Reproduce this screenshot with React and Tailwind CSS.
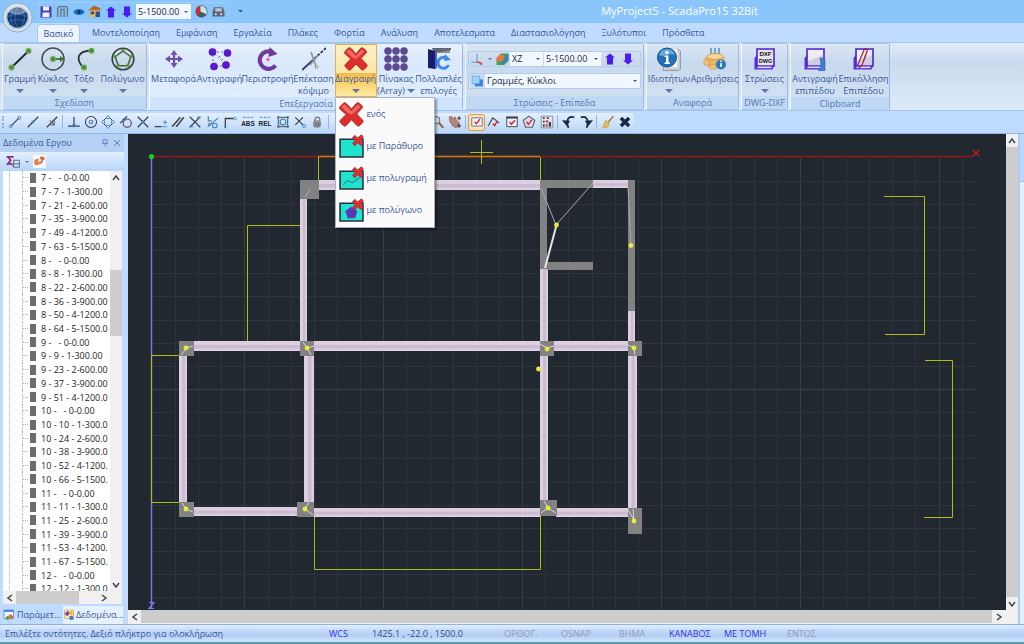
import React from "react";

const ribbonTabs = ["Μοντελοποίηση", "Εμφάνιση", "Εργαλεία", "Πλάκες", "Φορτία", "Ανάλυση", "Αποτελεσματα", "Διαστασιολόγηση", "Ξυλότυποι", "Πρόσθετα"];

const treeRows = [
  "7 -   - 0-0.00", "7 - 7 - 1-300.00", "7 - 21 - 2-600.00", "7 - 35 - 3-900.00", "7 - 49 - 4-1200.0", "7 - 63 - 5-1500.0",
  "8 -   - 0-0.00", "8 - 8 - 1-300.00", "8 - 22 - 2-600.00", "8 - 36 - 3-900.00", "8 - 50 - 4-1200.0", "8 - 64 - 5-1500.0",
  "9 -   - 0-0.00", "9 - 9 - 1-300.00", "9 - 23 - 2-600.00", "9 - 37 - 3-900.00", "9 - 51 - 4-1200.0",
  "10 -   - 0-0.00", "10 - 10 - 1-300.0", "10 - 24 - 2-600.0", "10 - 38 - 3-900.0", "10 - 52 - 4-1200.", "10 - 66 - 5-1500.",
  "11 -   - 0-0.00", "11 - 11 - 1-300.0", "11 - 25 - 2-600.0", "11 - 39 - 3-900.0", "11 - 53 - 4-1200.", "11 - 67 - 5-1500.",
  "12 -   - 0-0.00", "12 - 12 - 1-300.0",
];

function Svg({ s = 24, className = "", children }) {
  return (
    <svg viewBox="0 0 24 24" width={s} height={s} className={"shrink-0 " + className} fill="none" aria-hidden="true">
      {children}
    </svg>
  );
}

function Caret({ className = "text-[#5f76a8]", w = 8 }) {
  return (
    <svg viewBox="0 0 8 4" width={w} height={w / 2} className={"shrink-0 " + className} aria-hidden="true">
      <path d="M0 0h8L4 4z" fill="currentColor" />
    </svg>
  );
}

function RedX({ s = 25 }) {
  return (
    <Svg s={s}>
      <path d="M1 4.5 4.2 1.2c1-.8 2-.5 3 .4L12 6.800 16.500 1.500c.9-.9 2-1 3-.2l2.500 2.200c.9.9.8 1.700 0 2.600L17 11.500l5.500 5.700c.9 1 .8 1.900 0 2.700l-2.500 2.600c-1 .8-2 .8-3-.2L12 17l-5 5.500c-1 .9-1.900.9-2.800.1L1.500 20c-.9-.9-.8-1.800 0-2.700L6.800 12 1.200 7C.3 6.100.2 5.300 1 4.500z" fill="#dc2f2b" stroke="#a81c1c" strokeWidth=".8" />
      <path d="M2.500 4.800 5.300 2.200 12 9l6-6.500 2.500 2-6.800 6.600-2 .8-3.500-1.500z" fill="#f47a70" opacity=".8" />
    </Svg>
  );
}

const arrowUp = <path d="M12 1 22 9h-4v14H6V9H2z" fill="#4a1df0" />;
const arrowDown = <path d="M12 23 22 15h-4V1H6v14H2z" fill="#4a1df0" />;

const node = (x, y, r = 3) => <g key={x + "-" + y}><circle cx={x} cy={y} r={r} fill="#67a84a" /><circle cx={x} cy={y} r={r / 2.5} fill="#3d7a2e" /></g>;

const icons = {
  line: <Svg><path d="M3.500 20.500 20.500 4" stroke="#20242c" strokeWidth="1.800" />{node(3.500, 20.500)}{node(20.500, 4)}</Svg>,
  circle: <Svg><circle cx="12" cy="12" r="11" stroke="#454b55" strokeWidth="1.500" /><path d="M12 12h9" stroke="#2e7a2c" strokeWidth="1.800" /><path d="m19 9 4 3-4 3z" fill="#3a6b35" />{node(12, 12)}</Svg>,
  arc: <Svg><path d="M19.500 3.500C6 4 3 11 11 20.500" stroke="#30353e" strokeWidth="1.800" />{node(19.500, 3.800)}{node(12, 20.500)}</Svg>,
  polygon: <Svg><circle cx="12" cy="12" r="10.800" stroke="#3c424c" strokeWidth="1.600" /><path d="m12 4 7.800 5.700-3 9H7.200l-3-9z" stroke="#3f5e3a" strokeWidth="1.500" />{node(12, 4, 2)}{node(19.800, 9.700, 2)}{node(16.800, 18.500, 2)}{node(7.200, 18.500, 2)}{node(4.200, 9.700, 2)}</Svg>,
  move: <Svg><path d="M12 5v14M5 12h14" stroke="#6a52a8" strokeWidth="2.200" /><path d="m12 3 3.500 5h-7zM12 21l3.500-5h-7zM3 12l5-3.500v7zM21 12l-5-3.500v7z" fill="#6a52a8" /></Svg>,
  copy: <Svg><path d="M7 7l10 10" stroke="#8090c0" strokeDasharray="2 2" /><path d="M5 8v9M9 5h8M8 19h9M11 9l4 4" stroke="#536070" strokeWidth=".8" strokeDasharray="2 2" /><g fill="#6512d6" stroke="#3e1c98" strokeWidth=".6"><circle cx="4.500" cy="5" r="3.600" /><circle cx="19.500" cy="6" r="3.600" /><circle cx="6" cy="19.500" r="3.600" /><circle cx="18" cy="18" r="3.600" /></g></Svg>,
  rotate: <Svg><path d="M16 5A8.800 8.800 0 1 0 19.500 18.500" stroke="#6f3c9e" strokeWidth="4.200" /><path d="m13.500 0 8 7-9 3z" fill="#6f3c9e" /><circle cx="12" cy="12.500" r="1.700" fill="#f052c8" /></Svg>,
  trim: <Svg><path d="M0 23 11 13" stroke="#343a72" strokeWidth="1.800" /><path d="M12 12 24 1" stroke="#2f3448" strokeWidth="1.800" strokeDasharray="3 1.500" /><path d="m9 5 5 14M16 8l-8 10" stroke="#8a9099" strokeWidth="1.600" /><circle cx="14.500" cy="20" r="1.500" stroke="#8a9099" /></Svg>,
  array: <Svg>{[4, 12, 20].flatMap((x) => [4, 12, 20].map((y) => <circle key={x + "," + y} cx={x} cy={y} r="3.500" fill="#5d4a92" stroke="#47367a" strokeWidth=".5" />))}</Svg>,
  multi: <Svg><path d="M5 1h18v5H7z" fill="#8a919c" /><path d="M5 1 24 1v2L8 6z" fill="#5f6672" /><path d="M1 2 8 4v18l-7-1z" fill="#161f6e" /><path d="M8 4 10 6v15l-2 1z" fill="#4d62c8" /><path d="M20.500 12a5.500 5.500 0 1 0 1 6" stroke="#3e8be0" strokeWidth="3" /><path d="m18 7 6 6-7 1z" fill="#3e8be0" /><circle cx="16" cy="15.500" r="2" fill="#e8f2fc" /></Svg>,
  info: <Svg><path d="M10 2h11l2.500 2v18l-2 1.500H6z" fill="#c9ccd2" stroke="#8a8f98" strokeWidth=".8" /><path d="M9 1.500h11.500v19H7z" fill="#f2f3f5" /><circle cx="10" cy="10.500" r="9.500" fill="#2070b8" stroke="#174f8c" strokeWidth="1" /><path d="M2 8a8.300 8.300 0 0 1 16 0C12 5.500 7 11 2 8z" fill="#7fc0ea" opacity=".7" /><circle cx="10" cy="5.500" r="1.700" fill="#fff" /><path d="M7.500 8.500h4v7H13V17H7.500v-1.500H9V10H7.500z" fill="#fff" /></Svg>,
  count: <Svg><path d="M8 1v7M12 1v7M16 1v7" stroke="#6fa7d8" strokeWidth="2" /><path d="M2 10h20v5l-4 6H6l-4-5z" fill="#e6b768" /><ellipse cx="12" cy="9.500" rx="8" ry="3" fill="#f6d795" stroke="#d69b45" /><path d="M1 13h5v5H1zM7 18h6v4H7z" fill="#f1c77c" stroke="#c99043" strokeWidth=".6" /><circle cx="18" cy="17.500" r="5" fill="#287bc0" /><path d="M18 16v4M18 13.500v1.500" stroke="#fff" strokeWidth="1.600" /></Svg>,
  dxf: <Svg><path d="M4 8 1.500 11v11.500h18L21 19H4z" fill="#5a30e0" /><path d="M4 2h17v17H4z" fill="#e6e6ec" stroke="#4a22d8" strokeWidth="1.600" /><path d="M4.500 19.500h14v1.600h-14z" fill="#dadcf4" /><text x="12.500" y="9" textAnchor="middle" fontSize="6" fontWeight="800" fill="#111" fontFamily="Liberation Sans, sans-serif">DXF</text><text x="12.500" y="15.500" textAnchor="middle" fontSize="5.500" fontWeight="800" fill="#111" fontFamily="Liberation Sans, sans-serif">DWG</text></Svg>,
  copyLevel: <Svg><path d="M4 8 1.500 11v11.500h18L21 19H4z" fill="#5a30e0" /><path d="M4 2h17v17H4z" fill="#d0cfe2" stroke="#4a22d8" strokeWidth="1.600" /><path d="M5 3h15v5L5 14z" fill="#eeedf6" /><path d="M4.500 19.500h14v1.600h-14z" fill="#dadcf4" /><path d="M17 11c6 0 5 3 5 6v6.500h-7c3-2 3-4 3-6.500z" fill="#3f7fd0" stroke="#2858a8" strokeWidth=".6" /></Svg>,
  pasteLevel: <Svg><path d="M4 8 1.500 11v11.500h18L21 19H4z" fill="#5a30e0" /><path d="M4 2h17v17H4z" fill="#d0cfe2" stroke="#4a22d8" strokeWidth="1.600" /><path d="M5 3h15v5L5 14z" fill="#eeedf6" /><path d="M4.500 19.500h14v1.600h-14z" fill="#dadcf4" /><path d="M14 8 10 18c-1 3-5 2.500-4-.5L12 3c1-2.500 4-1.500 3.200 1L11 15" stroke="#a32a4c" strokeWidth="1.300" /></Svg>,
};

function RibbonButton({ icon, label, second, caret, width, inlineCaret }) {
  return (
    <button type="button" className={"flex shrink-0 flex-col items-center pt-[3px] " + width}>
      {icon}
      <span className="mt-[2px] whitespace-nowrap leading-[12px]">{label}</span>
      {second && (
        <span className="flex items-center gap-[2px] whitespace-nowrap leading-[12px]">
          {second}
          {inlineCaret && <Caret />}
        </span>
      )}
      {caret && <span className="flex h-[11px] items-center"><Caret /></span>}
    </button>
  );
}

function Group({ title, width, light, children }) {
  const tone = light ? "bg-[linear-gradient(#e6f0fd,#d9e8fb_30%,#e2f0ff)]" : "bg-[linear-gradient(#dce7f5,#c8d9ed_28%,#d3e3f5)]";
  const foot = light ? "bg-[#cfe5fd]" : "bg-[#bfd8f3]";
  return (
    <section aria-label={title} className={"flex shrink-0 flex-col rounded-[2px] border border-[#a9c5e8] border-l-white/70 border-r-[#9dbade] " + width + " " + tone}>
      <div className="flex flex-1 justify-center">{children}</div>
      <h2 className={"h-[13px] text-center leading-[13px] text-[#5577b4] " + foot}>{title}</h2>
    </section>
  );
}

function Combo({ label, value, className = "" }) {
  return (
    <span className={"flex items-center bg-[#f1f7ff] pr-[3px] text-[#222c44] " + className}>
      <select aria-label={label} className="min-w-0 flex-1 appearance-none bg-transparent pl-[2px] outline-none">
        <option>{value}</option>
      </select>
      <Caret w={4} className="text-[#445577]" />
    </span>
  );
}

function MenuThumb({ children }) {
  return (
    <Svg s={25}>
      <path d="M1 5h22v17H1z" fill="#1fe3cb" stroke="#24303c" strokeWidth="1.500" />
      {children}
      <path d="m13 3.500 2-2.200L18 3.800 21.500.8 23.500 3l-2.800 3 3 3-2.200 2.200L18 8.500l-3 2.700-2-2 2.800-3.200z" fill="#e03030" stroke="#9d1b22" strokeWidth=".7" />
    </Svg>
  );
}

function DeleteMenu() {
  const items = [
    ["ενός", <RedX key="x" />],
    ["με Παράθυρο", <MenuThumb key="w" />],
    ["με πολυγραμή", <MenuThumb key="l"><path d="m4 18 4-4 5 2 7-5" stroke="#2a9aa0" strokeWidth="1.300" /></MenuThumb>],
    ["με πολύγωνο", <MenuThumb key="p"><path d="m11.500 8.500 6 4-2 7h-7l-2.500-7z" fill="#5a37b8" /></MenuThumb>],
  ];
  return (
    <div role="menu" className="absolute left-0 top-full z-20 flex w-[100px] flex-col border border-[#a8b2c2] bg-[#fafafa] pb-px shadow-[2px_2px_2px_rgba(0,0,0,0.35)]">
      {items.map(([label, icon]) => (
        <button type="button" role="menuitem" key={label} className="flex h-8 items-center gap-[3px] whitespace-nowrap pl-[3px]">
          {icon}
          {label}
        </button>
      ))}
    </div>
  );
}

const K = "#3a3f48";
const B = "#3f86c8";
const tools = {
  a: [
    ["Τέλος", <><path d="m5 19 14-14" stroke={K} strokeWidth="2" /><circle cx="4.500" cy="19.500" r="2.500" stroke={B} strokeWidth="1.500" /><circle cx="19.500" cy="4.500" r="2.500" stroke={B} strokeWidth="1.500" /></>],
    ["Μέσο", <><path d="M3 21 21 3" stroke={K} strokeWidth="2" /><circle cx="12" cy="12" r="2.500" fill={B} /></>],
    ["Πλησίον", <><path d="M3 21 21 3" stroke={K} strokeWidth="2" /><path d="m8 9 8 8m0-8v8H9" stroke="#5c6470" strokeWidth="1.800" /></>],
  ],
  b: [
    ["Κάθετο", <><path d="M12 3v15M2 19h20" stroke={K} strokeWidth="2" /><circle cx="12" cy="18" r="2.500" stroke={B} strokeWidth="1.500" /></>],
    ["Κέντρο", <><circle cx="12" cy="12" r="9.500" stroke={K} strokeWidth="1.800" /><circle cx="12" cy="12" r="3" stroke={B} strokeWidth="2" /></>],
    ["Τεταρτημόριο", <><circle cx="12" cy="12" r="7.500" stroke={K} strokeWidth="1.600" /><g fill="#d8ecff" stroke={B} strokeWidth="1.500"><circle cx="12" cy="4" r="2.500" /><circle cx="12" cy="20" r="2.500" /><circle cx="4" cy="12" r="2.500" /><circle cx="20" cy="12" r="2.500" /></g></>],
    ["Εφαπτομένη", <><path d="m2 14 12-12" stroke={K} strokeWidth="2" /><circle cx="14" cy="14" r="7" stroke={K} strokeWidth="1.800" /><circle cx="9" cy="8" r="2.500" stroke={B} strokeWidth="1.500" /></>],
    ["Τομή", <><path d="m3 3 18 18M21 3 3 21" stroke={K} strokeWidth="2.200" /><circle cx="12" cy="12" r="2.500" fill={B} /></>],
    ["Προέκταση", <><path d="M1 20h12" stroke={K} strokeWidth="2" /><path d="M14 20h9M19 9v7m-3.500-3.500h7" stroke={B} strokeWidth="1.500" strokeDasharray="7 1" /></>],
    ["Παράλληλο", <path d="M2 20 16 4M9 20 22 4" stroke={K} strokeWidth="2.500" />],
    ["Φαινόμενη τομή", <><path d="m3 3 18 18M21 3 3 21" stroke={K} strokeWidth="2" /><path d="M2 20h7M15 4h7" stroke={B} strokeWidth="1.800" /></>],
    ["Τοπικά", <><path d="M4 2v8h6M3 20 21 5" stroke={B} strokeWidth="2" /><circle cx="15" cy="18" r="4" stroke={B} strokeWidth="1.800" /><circle cx="6" cy="16" r="2" stroke={K} /></>],
    ["Ορθογώνια", <><path d="M4 21V6h14" stroke={K} strokeWidth="2.200" /><circle cx="20" cy="6" r="2.500" stroke={B} strokeWidth="1.500" /><circle cx="4" cy="21" r="2" fill={B} /></>],
    ["ABS", <><path d="M3 4h18" stroke={B} strokeWidth="1.500" strokeDasharray="5 2" /><text x="12" y="18" textAnchor="middle" fontSize="11" fontWeight="900" fill="#20262f" fontFamily="Liberation Sans, sans-serif">ABS</text></>],
    ["REL", <><path d="M3 4h18" stroke={B} strokeWidth="1.500" strokeDasharray="5 2" /><text x="12" y="18" textAnchor="middle" fontSize="11" fontWeight="900" fill="#20262f" fontFamily="Liberation Sans, sans-serif">REL</text></>],
    ["Πλαίσιο", <><path d="M4 4h16v16H4z" stroke={K} strokeWidth="1.500" /><circle cx="12" cy="12" r="5" stroke={B} strokeWidth="2" /><path d="M2 2h4v4H2zM18 2h4v4h-4zM2 18h4v4H2zM18 18h4v4h-4z" fill="#54708c" /></>],
    ["Διαγραφή σημείου", <><path d="m4 4 13 13M17 4 4 17" stroke={K} strokeWidth="2" /><circle cx="19" cy="19" r="2.800" stroke={B} strokeWidth="1.500" /></>],
    ["Κλείδωμα", <><rect x="5" y="9" width="14" height="13" rx="6" fill="#8b8f96" /><path d="M8 11c0-10 10-10 9 0M9 15h8M9 18h8" stroke="#6c7076" strokeWidth="2" /></>],
  ],
  c: [
    ["Μεγέθυνση", <><circle cx="9" cy="9" r="6" fill="#cfe6fa" stroke="#6c7480" strokeWidth="2" /><path d="m13 13 8 9" stroke="#9a6a3c" strokeWidth="4" /></>],
    ["Μετακίνηση", <><path d="M2 3h5l2 4 3-4 3 7 4 3v6l-5 3-6-3-5-8z" fill="#b78478" stroke="#7b4e48" /><path d="M19 2v7m-3.500-3.500h7M19 15v7m-3-3.500h6" stroke="#3a4252" strokeWidth="2" /></>],
  ],
  d: [
    ["Επιλογή", <><path d="M3 5h18v14H3z" fill="#f8f4fa" stroke="#66709a" strokeWidth="1.600" /><path d="m8 12 3 3 6-8" stroke="#d62836" strokeWidth="2.500" /></>],
    ["Πολυγραμμή", <><path d="m2 19 8-14 11 9" stroke={K} strokeWidth="1.800" /><path d="m10 15 3 3 5-8" stroke="#d62836" strokeWidth="2.500" /></>],
    ["Παράθυρο", <><path d="M3 5h18v15H3z" fill="#eaf0fa" stroke={K} strokeWidth="1.500" /><path d="M2 4h20" stroke={K} strokeWidth="3" /><path d="m8 12 3 4 6-7" stroke="#d62836" strokeWidth="2.500" /></>],
    ["Πολύγωνο", <><path d="m12 2 10 7-4 12H6L2 9z" stroke="#5b626e" strokeWidth="1.800" fill="#d8dce4" /><path d="m8 12 3 4 6-8" stroke="#d62836" strokeWidth="2.500" /></>],
    ["Φίλτρα", <><path d="M2 2h20v20H2z" fill="#dfe4ee" stroke="#586070" /><path d="M5 4h3v3H5zM12 4h3v3h-3zM5 10h3v3H5zM5 16h3v4H5zM15 12h4v8h-4z" fill="#37404e" /><path d="M10 9h4v4h-4zM10 15h3v5h-3z" fill="#d63b4a" /></>],
  ],
  e: [
    ["Αναίρεση", <><path d="M21 4C11 1 6 8 11 22" stroke="#182848" strokeWidth="3" /><path d="m0 9 14 1-6 9z" fill="#182848" /></>],
    ["Επανάληψη", <><path d="M3 4c10-3 15 4 10 18" stroke="#182848" strokeWidth="3" /><path d="m24 9-14 1 6 9z" fill="#182848" /></>],
  ],
  f: [
    ["Καθαρισμός", <><path d="m21 2-9 11" stroke="#a0784a" strokeWidth="2.500" /><path d="m8 9 7 7-6 6H3z" fill="#eab950" stroke="#b98930" /></>],
    ["Κλείσιμο", <path d="m5 5 14 14M19 5 5 19" stroke="#14284c" strokeWidth="6" />],
  ],
};

function ToolGroup({ items, width, active }) {
  return (
    <div className={"flex shrink-0 items-center justify-between " + width}>
      {items.map(([name, art]) => (
        <button type="button" key={name} aria-label={name} className={name === active ? "flex size-[17px] items-center justify-center rounded-[2px] border border-[#e0a040] bg-[#fbe0b4]" : "flex size-[17px] items-center justify-center"}>
          <Svg s={14}>{art}</Svg>
        </button>
      ))}
    </div>
  );
}

const Sep = () => <span className="mx-[2px] h-[14px] w-px shrink-0 bg-[#9ab6dc]" />;

function Beam({ x, y, w, h }) {
  const horizontal = w > h;
  return (
    <g>
      <rect x={x} y={y} width={w} height={h} fill="#dccfdf" />
      {horizontal
        ? <rect x={x} y={y + h * 0.4} width={w} height={h * 0.35} fill="#cbbad0" />
        : <rect x={x + w * 0.4} y={y} width={w * 0.35} height={h} fill="#cbbad0" />}
    </g>
  );
}

function Drawing() {
  const cols = Array.from({ length: 35 }, (_, i) => 175 + i * 23.14);
  const rows = Array.from({ length: 19 }, (_, i) => 180.7 + i * 23.14);
  const beams = [
    [319, 180, 222, 10], [593, 180, 35, 8], [300, 198, 7, 144], [193, 341, 436, 10], [179, 356, 8, 147], [304, 351, 10, 156],
    [193, 507, 108, 9], [312, 508, 229, 9], [556, 508, 73, 9], [540, 269, 8, 73], [540, 355, 8, 147], [628, 311, 7, 31], [628, 355, 9, 154],
  ];
  const walls = [
    [300, 180, 19, 19], [540, 180, 53, 8], [540, 188, 7, 81], [547, 262, 46, 8], [628, 180, 7, 131],
    [179, 341, 15, 15], [300, 341, 14, 15], [540, 341, 14, 15], [628, 341, 14, 15],
    [179, 502, 15, 15], [297, 502, 17, 15], [540, 500, 17, 16], [628, 508, 14, 26],
  ];
  const dots = [[186, 348], [307, 348], [547, 349], [634, 348], [186, 509], [305, 509], [548, 508], [634, 521], [556.500, 225], [631, 245.500], [538.500, 369]];
  return (
    <svg viewBox="128 134 878 475" preserveAspectRatio="xMinYMin meet" className="h-full w-full" fill="none" role="img" aria-label="Κάτοψη">
      <g>
        {cols.map((x, i) => <path key={x} d={`M${Math.round(x) + 0.5} 158V609`} stroke={i % 6 === 3 ? "#373e47" : "#2d343d"} />)}
        {rows.map((y, i) => <path key={y} d={`M152 ${Math.round(y) + 0.5}H976`} stroke={i === 9 ? "#3a414a" : "#2d343d"} />)}
      </g>
      <path d="M151 156.500H972" stroke="#a01414" strokeWidth="1.600" />
      <path d="M318 156.500H540" stroke="#c87a08" strokeWidth="1.600" />
      <path d="M151.500 157V609" stroke="#8078f0" strokeWidth="1.400" />
      <g stroke="#b4ba14">
        <path d="M318.500 157v24M540.500 157v24" />
        <path d="M301 225.500H247.500V341" />
        <path d="M180 355.500H151.500V502.500H180" />
        <path d="M314.500 516V569.500H540.500V516" />
        <path d="M884 196.500H924.500V334.500H885M925 360.500H952.500V517.500H924" />
        <path d="M470 152.500H493M481.500 140V164" />
      </g>
      {beams.map((b) => <Beam key={b.join()} x={b[0]} y={b[1]} w={b[2]} h={b[3]} />)}
      {walls.map((b) => <rect key={b.join()} x={b[0]} y={b[1]} width={b[2]} height={b[3]} fill="#828282" />)}
      <g stroke="#a9a9ad">
        <path d="m541 188 15 37 37-42M628 188l3 57M310 189l-5 8" />
        <path d="m556 227-11 41" stroke="#e6e6e6" strokeWidth="2" />
        <path d="m186 348 7-2m-7 3-5 6M307 348l7-2m-7 2-4-6M307 348l4 7M547 348l-7-4m7 4 7-2M634 348l-6-3m6 3 1 7M186 509l7 3m-7-3-4-6M305 509l8 6m-8-6 4-7M548 508l-7 5m7-5 8 5m-8-5-4-7M634 520l-6-10m6 10-1-11" stroke="#dcd5de" />
      </g>
      {dots.map(([x, y]) => <circle key={x + "," + y} cx={x} cy={y} r="2.400" fill="#e8ee30" />)}
      <circle cx="151.500" cy="156.500" r="2.600" fill="#0fd41a" />
      <path d="m973 150 6 6m0-6-6 6" stroke="#d01818" strokeWidth="1.200" />
      <path d="M149 602.500h5l-5 6h5" stroke="#8078f0" strokeWidth="1.200" />
    </svg>
  );
}

function Chevron({ d }) {
  return <svg viewBox="0 0 8 8" width="8" height="8" fill="none" aria-hidden="true"><path d={d} stroke="#44484e" strokeWidth="1.500" /></svg>;
}
const UP = "M1 6l3-4 3 4";
const DOWN = "M1 2l3 4 3-4";
const LEFT = "M6 1 2 4l4 3";
const RIGHT = "M2 1l4 3-4 3";

export default function App() {
  return (
    <div className="flex h-screen flex-col overflow-hidden bg-[#bfdbff] font-['Open_Sans','Noto_Sans',sans-serif] text-[9px] text-[#3b5998]">
      <div className="relative shrink-0">
        <header className="flex h-[23px] items-center bg-[#8ac6fc] pl-[38px]">
          <div className="flex h-[19px] items-center gap-[3px] rounded-r-full border border-[#9fd0fb] pr-[4px]">
            <button type="button" aria-label="Αποθήκευση" className="flex w-[13px] justify-center"><Svg s={12}><path d="M1 1h20l2 2v20H1z" fill="#4b3fb4" /><path d="M6 1h12v8H6zM5 13h14v9H5z" fill="#eef0fa" /></Svg></button>
            <button type="button" aria-label="Μοντέλο" className="flex w-[14px] justify-center"><Svg s={13}><path d="M3 22V6l3-3h13l2 3v16M9 22V8h3M15 22V8h-3" stroke="#67717c" strokeWidth="2.500" /></Svg></button>
            <button type="button" aria-label="Προβολή" className="flex w-[13px] justify-center"><Svg s={12}><ellipse cx="12" cy="12" rx="11" ry="6" fill="#1c6fbe" /><circle cx="12" cy="12" r="3.500" fill="#0d2c50" /></Svg></button>
            <button type="button" aria-label="Κτίριο" className="flex w-[13px] justify-center"><Svg s={13}><path d="m1 9 10-8 12 5v4H1z" fill="#b5642c" /><path d="M3 10h18v12H3z" fill="#e8b64c" /><path d="M5 12h6v5H5zM14 12h8v10h-8z" fill="#2a4c94" /></Svg></button>
            <button type="button" aria-label="Πάνω" className="flex w-[13px] justify-center"><Svg s={12}>{arrowUp}</Svg></button>
            <button type="button" aria-label="Κάτω" className="flex w-[13px] justify-center"><Svg s={12}>{arrowDown}</Svg></button>
            <Combo label="Στάθμη" value="5-1500.00" className="h-[15px] w-[55px]" />
            <button type="button" aria-label="Σφαίρα" className="flex w-[14px] justify-center"><Svg s={13}><circle cx="12" cy="12" r="11" fill="#4b5866" /><path d="M12 1a11 11 0 0 0-8 18l8-7z" fill="#c92a3a" /><path d="M10 2a11 11 0 0 1 11 15L10 12z" fill="#bdeee8" /></Svg></button>
            <button type="button" aria-label="Απόδοση" className="flex w-[14px] justify-center"><Svg s={13}><path d="M4 4h16l3 8v9H1v-9z" fill="#5b6672" /><path d="M6 6h12v6H6z" fill="#b9c6d4" /><circle cx="7" cy="17" r="2" fill="#dfe6ee" /><circle cx="17" cy="17" r="2" fill="#dfe6ee" /></Svg></button>
          </div>
          <Caret w={5} className="ml-[8px] text-[#2c5590]" />
          <h1 className="flex-1 pl-[92px] text-center text-[11px] text-white">MyProject5 - ScadaPro15 32Bit</h1>
        </header>
        <button type="button" aria-label="Μενού εφαρμογής" className="absolute left-[2px] top-[2px] z-10 size-[31px]">
          <svg viewBox="0 0 32 32" fill="none" aria-hidden="true">
            <circle cx="16" cy="16" r="15" fill="#dbe6f2" stroke="#8fa9c8" />
            <circle cx="16" cy="16" r="12.500" fill="#b9c8da" />
            <circle cx="16" cy="16" r="10.500" fill="#163a70" />
            <path d="M6 15c6-3 14-3 20 0M7 20c5-2 13-2 18 0M16 6c-3 5-4 14 0 20M11 8c-3 5-3 11 1 17M21 8c3 5 3 11-1 17M8 10c5 2 11 2 16 0" stroke="#3f7fc4" strokeWidth=".7" />
            <ellipse cx="16" cy="8" rx="10" ry="5" fill="#fff" opacity=".35" />
          </svg>
        </button>
        <nav className="flex h-[19px] items-end pl-[37px]">
          <button type="button" className="h-[18px] w-[43px] rounded-t-[3px] border border-b-0 border-[#a5c8ef] bg-[#eaf3fe]">Βασικό</button>
          <div className="flex h-[18px] items-center gap-[16px] pl-[12px]">
            {ribbonTabs.map((t) => <button type="button" key={t} className="whitespace-nowrap">{t}</button>)}
          </div>
        </nav>
        <div className="flex h-[69px] gap-[2px] border-y border-[#a5c4e8] bg-[linear-gradient(#e2ecf8,#c9daee_28%,#ddeafa)] pl-[2px]">
          <Group title="Σχεδίαση" width="w-[145px]">
            <RibbonButton width="w-[34px]" icon={icons.line} label="Γραμμή" caret />
            <RibbonButton width="w-[32px]" icon={icons.circle} label="Κύκλος" caret />
            <RibbonButton width="w-[30px]" icon={icons.arc} label="Τόξο" caret />
            <RibbonButton width="w-[47px]" icon={icons.polygon} label="Πολύγωνο" caret />
          </Group>
          <Group title="Επεξεργασία" width="w-[314px]" light>
            <RibbonButton width="w-[46px]" icon={icons.move} label="Μεταφορά" />
            <RibbonButton width="w-[46px]" icon={icons.copy} label="Αντιγραφή" />
            <RibbonButton width="w-[50px]" icon={icons.rotate} label="Περιστροφή" />
            <RibbonButton width="w-[42px]" icon={icons.trim} label="Επέκταση" second="κόψιμο" />
            <div className="relative h-[53px] w-[42px] shrink-0">
              <button type="button" aria-haspopup="menu" aria-expanded="true" className="flex h-full w-full flex-col items-center border border-[#dcb458] bg-[linear-gradient(#fdf0c8,#fde7a8_54%,#f6b948_55%,#fbd878_80%,#ffeaa0)] pt-[2px]">
                <RedX s={24} />
                <span className="mt-[2px] whitespace-nowrap leading-[12px]">Διαγραφή</span>
                <span className="flex h-[11px] items-center"><Caret /></span>
              </button>
              <DeleteMenu />
            </div>
            <RibbonButton width="w-[39px]" icon={icons.array} label="Πίνακας" second="(Array)" inlineCaret />
            <RibbonButton width="w-[46px]" icon={icons.multi} label="Πολλαπλές" second="επιλογές" />
          </Group>
          <Group title="Στρώσεις - Επίπεδα" width="w-[179px]">
            <div className="flex flex-1 flex-col gap-[6px] px-[2px] pt-[7px]">
              <div className="flex h-[16px] items-center border border-[#b3cdea]">
                <button type="button" aria-label="Άξονες" className="flex w-[25px] items-center gap-[4px] pl-[2px]"><Svg s={13}><path d="M11 1v15M1 17h10" stroke="#4a86c8" strokeWidth="1.500" /><path d="m11 16 8 3v3" stroke="#d83a4c" strokeWidth="3" /></Svg><Caret w={4} /></button>
                <button type="button" aria-label="Επίπεδο εργασίας" className="flex w-[16px] justify-center"><Svg s={13}><path d="M9 1h14v13l-8 8H1V9z" fill="#36a35c" /><path d="m9 1 8 6-5 9H1V9z" fill="#e07a48" /><path d="m16 8 7-6v12l-8 8-5-3z" fill="#3f7bc8" opacity=".7" /></Svg></button>
                <Combo label="Επίπεδο" value="XZ" className="h-full w-[33px]" />
                <Combo label="Στάθμη επιπέδου" value="5-1500.00" className="ml-px h-full w-[57px]" />
                <button type="button" aria-label="Επόμενη στάθμη" className="flex w-[18px] justify-center"><Svg s={12}>{arrowUp}</Svg></button>
                <button type="button" aria-label="Προηγούμενη στάθμη" className="flex w-[17px] justify-center"><Svg s={12}>{arrowDown}</Svg></button>
              </div>
              <div className="flex h-[16px] items-center border border-[#b3cdea]">
                <span className="flex w-[16px] justify-center"><Svg s={13}><path d="M7 8h15v13H7z" fill="#3b86d6" /><path d="M2 2h14v14H2z" fill="#9fd0f8" stroke="#4b90d8" /></Svg></span>
                <Combo label="Στρώση" value="Γραμμές, Κύκλοι" className="h-full flex-1" />
              </div>
            </div>
          </Group>
          <Group title="Αναφορά" width="w-[93px]">
            <RibbonButton width="w-[44px]" icon={icons.info} label="Ιδιοτήτων" caret />
            <RibbonButton width="w-[47px]" icon={icons.count} label="Αριθμήσεις" />
          </Group>
          <Group title="DWG-DXF" width="w-[47px]">
            <RibbonButton width="w-[44px]" icon={icons.dxf} label="Στρώσεις" caret />
          </Group>
          <Group title="Clipboard" width="w-[100px]">
            <RibbonButton width="w-[47px]" icon={icons.copyLevel} label="Αντιγραφή" second="επιπέδου" />
            <RibbonButton width="w-[50px]" icon={icons.pasteLevel} label="Επικόλληση" second="Επιπέδου" />
          </Group>
        </div>
      </div>

      <div className="flex h-[22px] shrink-0 items-center">
        <div className="flex h-[19px] items-center rounded-r-[3px] bg-[linear-gradient(#e3effd,#cfe3fb_50%,#bcd6f6)] pr-px">
          <span className="mx-[2px] h-[12px] border-l-2 border-dotted border-[#8fb0dc]" />
          <ToolGroup items={tools.a} width="w-[54px]" />
          <Sep />
          <ToolGroup items={tools.b} width="w-[261px]" />
          <Sep />
          <span className="w-[98px]" />
          <ToolGroup items={tools.c} width="w-[34px]" />
          <Sep />
          <ToolGroup items={tools.d} width="w-[87px]" active="Επιλογή" />
          <Sep />
          <ToolGroup items={tools.e} width="w-[34px]" />
          <Sep />
          <ToolGroup items={tools.f} width="w-[34px]" />
        </div>
      </div>

      <main className="flex min-h-0 flex-1 border-t border-[#8fb2de]">
        <aside className="flex w-[124px] shrink-0 flex-col">
          <div className="flex h-[18px] shrink-0 items-center justify-between bg-[#b5d0f2] px-[3px]">
            <h2>Δεδομένα Εργου</h2>
            <span className="flex items-center gap-[4px]">
              <button type="button" aria-label="Καρφίτσωμα"><Svg s={8}><path d="M6 2h12v11H6zM3 14h18M12 14v8" stroke="#5b7fb8" strokeWidth="2.500" /></Svg></button>
              <button type="button" aria-label="Κλείσιμο πίνακα"><Svg s={8}><path d="m3 3 18 18M21 3 3 21" stroke="#5b7fb8" strokeWidth="3" /></Svg></button>
            </span>
          </div>
          <div className="flex h-[19px] shrink-0 items-center gap-[4px] bg-[linear-gradient(#e3efff,#b8d4f8)] pl-[6px]">
            <button type="button" aria-label="Δέντρο" className="flex items-center gap-[5px]"><Svg s={14}><path d="M1 3h12M3 3l5 6-5 6h8" stroke="#8a2a78" strokeWidth="3" /><path d="M13 9h10v12H13zM13 15h10M10 18h3" stroke="#5a6472" strokeWidth="1.600" /></Svg><Caret w={4} /></button>
            <button type="button" aria-label="Ανανέωση" className="bg-[#f6f9ff]"><Svg s={13}><path d="M2 14c0-6 5-9 9-6l-2 4c3 2 7-1 8-4 4 4-1 10-6 9-4 4-9 2-9-3z" fill="#e8824a" /><path d="M12 4c5-3 10-1 10 4l-6 3z" fill="#d86a40" /></Svg></button>
          </div>
          <div className="ml-[3px] mr-[2px] flex min-h-0 flex-1 bg-white">
            <div className="min-w-0 flex-1 overflow-hidden pl-[6px]">
              <ul className="flex h-[425px] flex-col border-l border-dotted border-[#b4b4b4] pl-[12px] text-[#1c1c1c]">
                {treeRows.map((r, i) => (
                  <li key={i} className="flex flex-1 items-center border-l border-dotted border-[#b4b4b4]">
                    <span className="w-[5px] border-t border-dotted border-[#b4b4b4]" />
                    <span className="ml-[2px] h-[10px] w-[6px] shrink-0 bg-[#6c6c6c]" />
                    <span className="ml-[5px] whitespace-pre leading-[13px]">{r}</span>
                  </li>
                ))}
              </ul>
            </div>
            <div className="flex w-[12px] shrink-0 flex-col bg-[#f0f0f0]">
              <span className="flex h-[13px] items-center justify-center"><Chevron d={UP} /></span>
              <span className="mt-[86px] h-[66px] bg-[#cdcdcd]" />
              <span className="mt-auto flex h-[13px] items-center justify-center"><Chevron d={DOWN} /></span>
            </div>
          </div>
          <div className="ml-[3px] mr-[2px] flex h-[13px] shrink-0 items-center bg-[#f0f0f0] pr-[12px]">
            <span className="flex w-[13px] justify-center"><Chevron d={LEFT} /></span>
            <span className="h-full w-[63px] bg-[#cdcdcd]" />
            <span className="ml-auto flex w-[13px] justify-center"><Chevron d={RIGHT} /></span>
          </div>
          <div className="mt-[2px] flex h-[18px] shrink-0 items-center pl-[3px]">
            <button type="button" className="flex w-[60px] items-center gap-[2px]"><Svg s={12}><path d="M2 2h19v17H2z" fill="#f6faff" stroke="#5482c0" strokeWidth="1.500" /><path d="M2 2h19v4H2z" fill="#4c88d8" /><path d="m10 14 5-4 6 5-4 7z" fill="#e07038" /><circle cx="9" cy="18" r="4" fill="#4aa848" /></Svg><span className="whitespace-nowrap">Παράμετ...</span></button>
            <button type="button" className="flex h-full w-[60px] items-center gap-px bg-[#e6f1ff]"><Svg s={12}><path d="M3 2h18v17H3z" fill="#fff4c8" stroke="#d0a838" strokeWidth="1.500" /><path d="m3 9 7-6 4 6-6 6z" fill="#8448a8" /><circle cx="16" cy="8" r="4" fill="#e4b828" /><path d="m12 15 7-2 3 8-8 1z" fill="#4a78c8" /></Svg><span className="whitespace-nowrap">Δεδομένα...</span></button>
          </div>
        </aside>

        <section className="ml-[4px] flex min-w-0 flex-1 flex-col">
          <div className="flex min-h-0 flex-1">
            <div className="min-w-0 flex-1 bg-[#222830]"><Drawing /></div>
            <div className="flex w-[12px] shrink-0 flex-col items-center bg-[#cdcdcd]">
              <span className="flex h-[13px] w-full items-center justify-center bg-[#f0f0f0]"><Chevron d={UP} /></span>
              <span className="mt-auto flex h-[13px] w-full items-center justify-center bg-[#f0f0f0]"><Chevron d={DOWN} /></span>
            </div>
          </div>
          <div className="flex h-[13px] shrink-0 items-center justify-between bg-[#cdcdcd]">
            <span className="flex h-full w-[13px] items-center justify-center bg-[#f0f0f0]"><Chevron d={LEFT} /></span>
            <span className="flex h-full w-[26px] items-center bg-[#f0f0f0] pl-[3px]"><Chevron d={RIGHT} /></span>
          </div>
          <div className="h-px shrink-0 bg-[#f0f0f0]" />
        </section>
        <div className="flex w-[6px] shrink-0 flex-col border-l-2 border-[#aecbf0] bg-[#e4f0fe]">
          <span className="h-[48px] border-b border-[#9dbde6] bg-[#bcd7fb]" />
        </div>
      </main>

      <footer className="flex h-[18px] shrink-0 items-center whitespace-nowrap border-t border-[#8fb2de] bg-[linear-gradient(#e4efff,#c4dafa_30%,#b4cff5_60%,#cfe4fc)] pl-[5px]">
        <span className="w-[324px]">Επιλέξτε οντότητες. Δεξιό πλήκτρο για ολοκλήρωση</span>
        <span className="w-[43px] font-medium text-[#2f34e8]">WCS</span>
        <span className="w-[132px] text-[#2f4c86]">1425.1 , -22.0 , 1500.0</span>
        <button type="button" className="w-[57px] text-left text-[#8c9cb4]">ΟΡΘΟΓ.</button>
        <button type="button" className="w-[58px] text-left text-[#8c9cb4]">OSNAP</button>
        <button type="button" className="w-[50px] text-left text-[#8c9cb4]">ΒΗΜΑ</button>
        <button type="button" className="w-[55px] text-left font-medium text-[#2f34e8]">ΚΑΝΑΒΟΣ</button>
        <button type="button" className="w-[63px] text-left font-medium text-[#2f34e8]">ΜΕ ΤΟΜΗ</button>
        <button type="button" className="text-left text-[#8c9cb4]">ΕΝΤΟΣ</button>
      </footer>
      <div className="h-[2px] shrink-0 bg-[#5f9aa8]" />
    </div>
  );
}
